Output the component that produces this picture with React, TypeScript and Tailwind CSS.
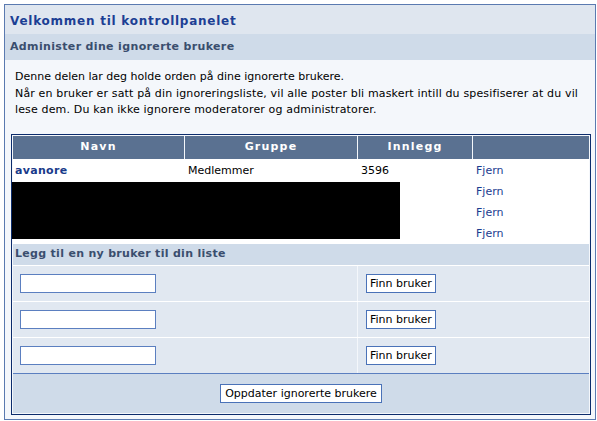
import React from 'react';

const font = { fontFamily: '"DejaVu Sans", Verdana, sans-serif' };

const FormRow: React.FC = () => (
  <div className="grid grid-cols-[344px_231px] gap-x-px border-t border-white">
    <div className="h-[35px] bg-[#e1e8f1] flex items-center pl-[7px]">
      <input type="text" className="w-[136px] h-[19px] bg-white border border-[#5b7fc0] outline-none" />
    </div>
    <div className="h-[35px] bg-[#e1e8f1] flex items-center pl-[8px]">
      <button className="h-[19px] px-[3px] bg-white border border-[#4a72b8] text-[11px] leading-none text-black">
        Finn bruker
      </button>
    </div>
  </div>
);

const App: React.FC = () => {
  const hidden = [0, 1, 2];

  return (
    <div className="w-[597px] h-[421px] bg-white pt-[4px] pl-[4px]" style={font}>
      <div className="w-[592px] h-[416px] border border-[#5a7ab0] bg-[#f4f7fb] flex flex-col">
        {/* Title */}
        <div className="h-[29px] bg-[#dfe6ef] flex items-center pl-[5px] pt-[2px] text-[12px] font-bold text-[#1c3f94] tracking-[0.75px]">
          Velkommen til kontrollpanelet
        </div>
        <div className="h-[26px] bg-[#cfdbe9] flex items-center pl-[5px] text-[11px] font-bold text-[#3a4e6e] tracking-[0.35px]">
          Administer dine ignorerte brukere
        </div>

        {/* Intro */}
        <div className="pl-[10px] pt-[9px] w-[580px] h-[74px] text-[11px] leading-[16.5px] text-black">
          <p>Denne delen lar deg holde orden på dine ignorerte brukere.</p>
          <p className="tracking-[0.15px]">
            Når en bruker er satt på din ignoreringsliste, vil alle poster bli maskert intill du spesifiserer at du vil
            lese dem. Du kan ikke ignorere moderatorer og administratorer.
          </p>
        </div>

        {/* Table */}
        <div className="ml-[6px] w-[580px] border border-[#0c2c6c] p-px bg-[#f4f7fb]">
          <div className="grid grid-cols-[171px_172px_114px_116px] gap-x-px h-[23px] text-white text-[11px] font-bold tracking-[1.2px]">
            <div className="bg-[#5a7191] flex items-center justify-center">Navn</div>
            <div className="bg-[#5a7191] flex items-center justify-center">Gruppe</div>
            <div className="bg-[#5a7191] flex items-center justify-center">Innlegg</div>
            <div className="bg-[#5a7191]" />
          </div>

          <div className="bg-white text-[11px]">
            <div className="grid grid-cols-[171px_172px_114px_116px] gap-x-px h-[22px] pt-[2px] items-center">
              <div className="pl-[2px] font-bold text-[#1a3a8a] tracking-[0.3px]">avanore</div>
              <div className="pl-[3px] text-black">Medlemmer</div>
              <div className="pl-[3px] text-black">3596</div>
              <div className="pl-[3px] text-[#1a3d8f]">Fjern</div>
            </div>
            <div className="relative">
              {hidden.map((i) => (
                <div key={i} className="grid grid-cols-[171px_172px_114px_116px] gap-x-px h-[21px] pt-[2px] items-center">
                  <div />
                  <div />
                  <div />
                  <div className="pl-[3px] text-[#1a3d8f]">Fjern</div>
                </div>
              ))}
              <div className="absolute left-[-1px] top-[1px] w-[388px] h-[57px] bg-black" />
            </div>
          </div>

          <div className="h-[21px] bg-[#cfdbe9] flex items-center pl-[2px] text-[11px] font-bold text-[#3a4e6e] tracking-[0.3px]">
            Legg til en ny bruker til din liste
          </div>

          <FormRow />
          <FormRow />
          <FormRow />

          <div className="h-[40px] bg-[#cfdbe9] border-t border-[#5b7fc0] flex items-center justify-center">
            <button className="h-[19px] px-[4px] bg-white border border-[#4a72b8] text-[11px] leading-none text-black">
              Oppdater ignorerte brukere
            </button>
          </div>
        </div>
      </div>
    </div>
  );
};

export default App;
